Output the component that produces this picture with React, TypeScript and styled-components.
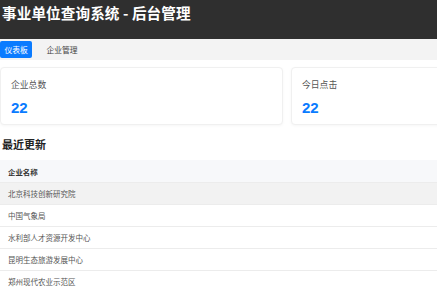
import styled, { createGlobalStyle } from 'styled-components';

const GlobalStyle = createGlobalStyle`
  html, body {
    margin: 0;
    padding: 0;
    background: #ffffff;
    overflow: hidden;
  }
  body {
    font-family: "Noto Sans CJK SC", "Liberation Sans", sans-serif;
    color: #333;
  }
`;

const companies = [
  '北京科技创新研究院',
  '中国气象局',
  '水利部人才资源开发中心',
  '昆明生态旅游发展中心',
  '郑州现代农业示范区',
];

export default function App() {
  return (
    <Page>
      <GlobalStyle />
      <Header>
        <Title>事业单位查询系统 - 后台管理</Title>
      </Header>
      <TabBar>
        <Tab $active>仪表板</Tab>
        <Tab>企业管理</Tab>
      </TabBar>
      <Stats>
        <StatCard>
          <StatLabel>企业总数</StatLabel>
          <StatValue>22</StatValue>
        </StatCard>
        <StatCard>
          <StatLabel>今日点击</StatLabel>
          <StatValue>22</StatValue>
        </StatCard>
      </Stats>
      <SectionTitle>最近更新</SectionTitle>
      <Table>
        <thead>
          <tr>
            <HeadCell>企业名称</HeadCell>
          </tr>
        </thead>
        <tbody>
          {companies.map((name, i) => (
            <Row key={name} $hover={i === 0}>
              <Cell>{name}</Cell>
            </Row>
          ))}
        </tbody>
      </Table>
    </Page>
  );
}

const Page = styled.div`
  width: 437px;
  height: 292px;
  overflow: hidden;
`;

const Header = styled.header`
  height: 39px;
  background: #2f2f2f;
  padding: 2px 2px 0;
  box-sizing: border-box;
`;

const Title = styled.h1`
  margin: 0;
  color: #ffffff;
  font-size: 14.6px;
  line-height: 21px;
  font-weight: 700;
  letter-spacing: 0.1px;
`;

const TabBar = styled.nav`
  height: 21px;
  background: #f3f3f3;
  display: flex;
  align-items: center;
  gap: 6px;
  padding: 0;
`;

const Tab = styled.div<{ $active?: boolean }>`
  height: 17px;
  display: flex;
  align-items: center;
  padding: 0 ${(p) => (p.$active ? '4.5px' : '8px')};
  border-radius: 2px;
  font-size: 7.8px;
  background: ${(p) => (p.$active ? '#0a7bff' : 'transparent')};
  color: ${(p) => (p.$active ? '#ffffff' : '#444')};
`;

const Stats = styled.section`
  display: grid;
  grid-template-columns: 283px 200px;
  gap: 8px;
  margin-top: 7px;
`;

const StatCard = styled.div`
  height: 58px;
  box-sizing: border-box;
  background: #fff;
  border: 1px solid #f0f0f0;
  border-radius: 4px;
  box-shadow: 0 1px 3px rgba(0, 0, 0, 0.04);
  padding: 11px 10px 0;
`;

const StatLabel = styled.div`
  font-size: 8.8px;
  line-height: 12px;
  color: #555;
`;

const StatValue = styled.div`
  margin-top: 8px;
  font-family: "Liberation Sans", sans-serif;
  font-size: 15px;
  line-height: 18px;
  font-weight: 700;
  color: #0a7bff;
`;

const SectionTitle = styled.h2`
  margin: 11px 0 0 2px;
  font-size: 11px;
  line-height: 16px;
  font-weight: 700;
  color: #222;
`;

const Table = styled.table`
  width: 437px;
  margin-top: 8px;
  border-collapse: collapse;
`;

const HeadCell = styled.th`
  height: 22px;
  padding: 0 8px;
  text-align: left;
  font-size: 7.4px;
  font-weight: 700;
  color: #333;
  background: #f7f8fa;
  border-bottom: 1px solid #ececec;
`;

const Row = styled.tr<{ $hover?: boolean }>`
  background: ${(p) => (p.$hover ? '#f2f2f2' : '#ffffff')};
`;

const Cell = styled.td`
  height: 21px;
  padding: 0 8px;
  font-size: 7.5px;
  color: #555;
  border-bottom: 1px solid #ececec;
`;
